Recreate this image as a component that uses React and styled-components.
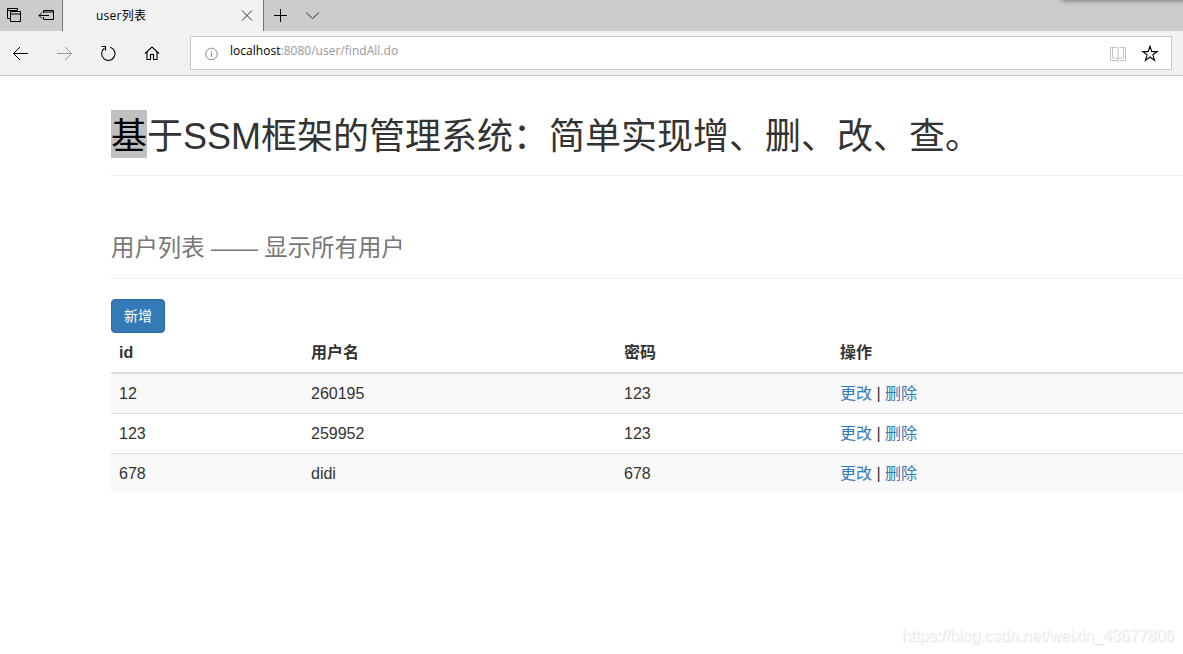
import React from "react";
import styled, { createGlobalStyle } from "styled-components";

const GlobalStyle = createGlobalStyle`
  * { box-sizing: border-box; }
  body {
    margin: 0;
    background: #fff;
    color: #333;
    font-family: "Liberation Sans", "Noto Sans CJK SC", sans-serif;
    overflow: hidden;
  }
`;

const Window = styled.div`
  position: relative;
  width: 1183px;
  height: 654px;
  overflow: hidden;
  background: #fff;
`;

const TabStrip = styled.div`
  position: relative;
  display: flex;
  height: 31px;
  background: #ccc;
`;

const TabTools = styled.div`
  display: flex;
  width: 63px;
  border-right: 1px solid #767676;
`;

const Tab = styled.div`
  display: flex;
  justify-content: space-between;
  width: 200px;
  padding-left: 33px;
  background: #f1f1f1;
`;

const TabTitle = styled.span`
  font: 12px/32px "Open Sans", "Noto Sans CJK SC", sans-serif;
  letter-spacing: 0.25px;
  color: #000;
`;

const TabActions = styled.div`
  display: flex;
  border-left: 1px solid #767676;
`;

const WindowShadow = styled.div`
  position: absolute;
  top: -6px;
  right: -10px;
  width: 130px;
  height: 6px;
  box-shadow: 0 0 5px 1px rgba(0, 0, 0, 0.4);
`;

const Toolbar = styled.div`
  display: flex;
  height: 45px;
  padding: 5px 11px 5px 0;
  background: #f1f1f1;
  border-bottom: 1px solid #ccc;
`;

const NavButtons = styled.div`
  display: flex;
  width: 190px;
`;

const AddressBar = styled.div`
  display: flex;
  flex: 1;
  height: 34px;
  background: #fff;
  border: 1px solid #c9c9c9;
`;

const Url = styled.span`
  flex: 1;
  font: 12px/28px "Open Sans", "Noto Sans", sans-serif;
  letter-spacing: 0.02px;
  color: #999;
`;

const Host = styled.span`
  color: #000;
`;

const Icon = styled.svg`
  display: block;
  flex: none;
  fill: none;
  stroke: ${(p) => p.$color || "#000"};
  stroke-width: ${(p) => p.$weight || 1};
`;

const Page = styled.main`
  padding-left: 111px;
`;

const Header = styled.header`
  height: ${(p) => p.$height}px;
  padding-top: ${(p) => p.$top}px;
  border-bottom: 1px solid #eee;
`;

const Title = styled.h1`
  display: flex;
  margin: 0;
  font-size: 36px;
  font-weight: 400;
  line-height: 54px;
  white-space: nowrap;
`;

const Selected = styled.span`
  height: 48px;
  background: #c0c0c0;
  color: #000;
`;

const Subtitle = styled.h2`
  margin: 0;
  font-size: 23.4px;
  font-weight: 400;
  line-height: 30px;
  color: #777;
`;

const AddButton = styled.button`
  display: block;
  width: 54px;
  height: 34px;
  margin-top: 20px;
  padding: 0 0 1px;
  border: 1px solid #2e6da4;
  border-radius: 4px;
  background: #337ab7;
  color: #fff;
  font: 14px/20px "Liberation Sans", "Noto Sans CJK SC", sans-serif;
`;

const Table = styled.table`
  width: 1072px;
  table-layout: fixed;
  border-collapse: separate;
  border-spacing: 0;
  font-size: 16px;
  line-height: 22px;
`;

const HeadCell = styled.th`
  width: ${(p) => p.$width};
  height: 41px;
  padding: 0 8px;
  text-align: left;
  border-bottom: 2px solid #ddd;
`;

const Row = styled.tr`
  background: ${(p) => (p.$striped ? "#f9f9f9" : "#fff")};
`;

const Cell = styled.td`
  height: ${(p) => (p.$first || p.$last ? 39 : 40)}px;
  padding: ${(p) => (p.$last ? "2px 8px 0" : "0 8px")};
  border-top: ${(p) => (p.$first ? "0" : "1px solid #ddd")};
`;

const Action = styled.a`
  color: #337ab7;
`;

const Watermark = styled.div`
  position: absolute;
  right: 9px;
  bottom: 9px;
  font-size: 16px;
  line-height: 18px;
  color: #fbfbfb;
  text-shadow: 1px 1px 1px #ddd;
`;

const columns = [
  ["id", "192px"],
  ["用户名", "313px"],
  ["密码", "216px"],
  ["操作", "351px"],
];

const users = [
  ["12", "260195", "123"],
  ["123", "259952", "123"],
  ["678", "didi", "678"],
];

export default function App() {
  return (
    <Window>
      <GlobalStyle />
      <TabStrip>
        <TabTools>
          <Icon width="30" height="31">
            <path d="M10.5 18.5h-3v-10h10v2M7.5 10.5h10M10.5 11.5h10v10h-10zM10.5 14h10" />
          </Icon>
          <Icon width="32" height="31">
            <path d="M13.5 13v-2.500h10v9h-10V17M13.500 12h10M9 15.500h10M12 12.500l-3 3 3 3" />
          </Icon>
        </TabTools>
        <Tab>
          <TabTitle>user列表</TabTitle>
          <Icon width="32" height="31" $color="#333">
            <path d="M11 10.500l10 10M21 10.500l-10 10" />
          </Icon>
        </Tab>
        <TabActions>
          <Icon width="32" height="31">
            <path d="M10 15.500h13M16.500 9v13" />
          </Icon>
          <Icon width="32" height="31" $color="#333">
            <path d="M10 12.500l6.500 6 6.500-6" />
          </Icon>
        </TabActions>
        <WindowShadow />
      </TabStrip>
      <Toolbar>
        <NavButtons>
          <Icon width="42" height="34">
            <path d="M13.500 17.500H28M20 11l-6.500 6.500L20 24" />
          </Icon>
          <Icon width="44" height="34" $color="#999">
            <path d="M15 17.500h14.500M23 11l6.500 6.500L23 24" />
          </Icon>
          <Icon width="44" height="34" $weight="1.100">
            <path d="M24.200 11.200a6.700 6.700 0 1 1-5.800 1M15.500 10.500h4v4" />
          </Icon>
          <Icon width="44" height="34" $weight="1.100">
            <path d="M15 17.500l7-6.500 7 6.500M17 16v7.500h3.500v-5h3v5H27V16" />
          </Icon>
        </NavButtons>
        <AddressBar>
          <Icon width="39" height="32" $color="#888">
            <circle cx="20.500" cy="17" r="5.800" />
            <path d="M20.500 15.800v4M20.500 13.500v1.200" />
          </Icon>
          <Url>
            <Host>localhost</Host>:8080/user/findAll.do
          </Url>
          <Icon width="32" height="32" $color="#c4c4c4">
            <path d="M8.500 10.500h6l1.500 1 1.500-1h6v13h-6l-1.500 1-1.500-1h-6zM16 11.500v12M10.500 10.500v10.500h4l1.500 1 1.500-1h4v-10.500" />
          </Icon>
          <Icon width="37" height="32" $weight="1.100">
            <path d="M16 9.300l1.800 5.300h5.400l-4.300 3.200 1.700 5.500-4.600-3.300-4.600 3.300 1.700-5.500-4.300-3.200h5.400z" />
          </Icon>
        </AddressBar>
      </Toolbar>
      <Page>
        <Header $height={100} $top={34}>
          <Title>
            <Selected>基</Selected>于SSM框架的管理系统：简单实现增、删、改、查。
          </Title>
        </Header>
        <Header $height={103} $top={57}>
          <Subtitle>用户列表 —— 显示所有用户</Subtitle>
        </Header>
        <AddButton>新增</AddButton>
        <Table>
          <thead>
            <tr>
              {columns.map(([name, width]) => (
                <HeadCell key={name} $width={width}>{name}</HeadCell>
              ))}
            </tr>
          </thead>
          <tbody>
            {users.map((user, i) => (
              <Row key={user[0]} $striped={i % 2 === 0}>
                {user.map((value, j) => (
                  <Cell key={j} $first={i === 0} $last={i === 2}>{value}</Cell>
                ))}
                <Cell $first={i === 0} $last={i === 2}>
                  <Action>更改</Action> | <Action>删除</Action>
                </Cell>
              </Row>
            ))}
          </tbody>
        </Table>
      </Page>
      <Watermark>https://blog.csdn.net/weixin_43677806</Watermark>
    </Window>
  );
}
